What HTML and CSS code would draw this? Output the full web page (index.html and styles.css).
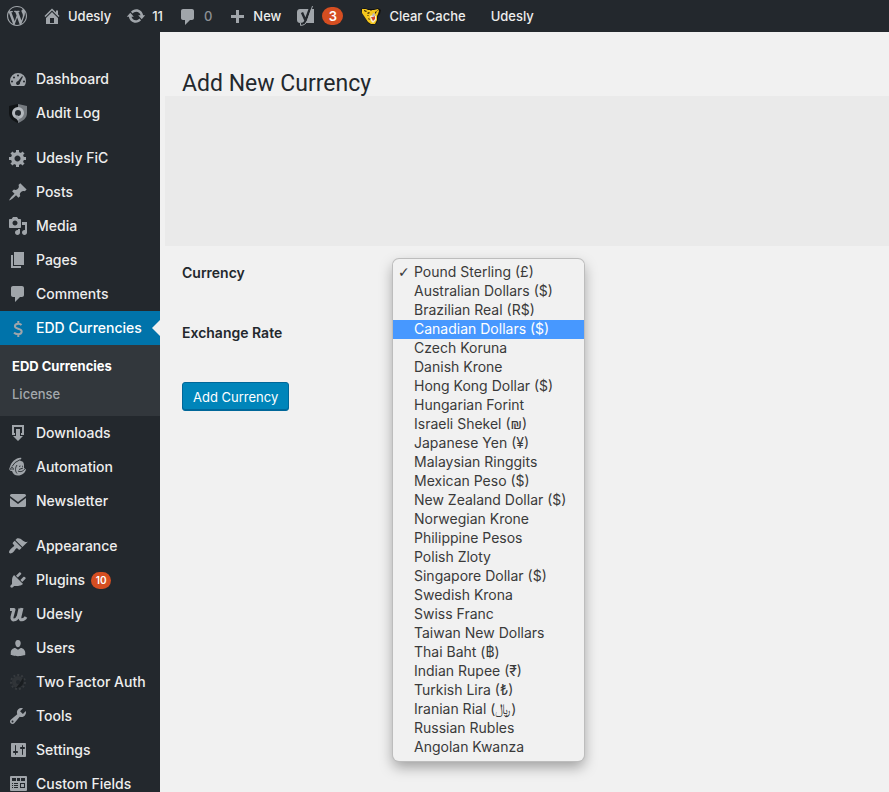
FILE: index.html
```html
<!DOCTYPE html>
<html lang="en">
<head>
<meta charset="utf-8">
<meta name="viewport" content="width=device-width, initial-scale=1">
<title>Add New Currency</title>
<link rel="stylesheet" href="styles.css">
</head>
<body>
<div class="app">
  <header class="topbar">
    <a class="topbar-link" href="#" aria-label="WordPress"><svg class="icon" viewBox="0 0 20 20"><path d="M20 10c0-5.51-4.49-10-10-10C4.48 0 0 4.49 0 10c0 5.52 4.48 10 10 10 5.51 0 10-4.48 10-10zM7.78 15.37L4.37 6.22c.55-.02 1.17-.08 1.17-.08.5-.06.44-1.13-.06-1.11 0 0-1.45.11-2.37.11-.18 0-.37 0-.58-.01C4.12 2.69 6.87 1.11 10 1.11c2.33 0 4.45.87 6.05 2.34-.68-.11-1.65.39-1.65 1.58 0 .74.45 1.36.9 2.1.35.61.55 1.36.55 2.46 0 1.49-1.4 5-1.4 5l-3.03-8.37c.54-.02.82-.17.82-.17.5-.05.44-1.25-.06-1.22 0 0-1.44.12-2.38.12-.87 0-2.33-.12-2.33-.12-.5-.03-.56 1.2-.06 1.22l.92.08 1.26 3.41zM17.41 10c.24-.64.74-1.87.43-4.25.7 1.29 1.05 2.71 1.05 4.25 0 3.29-1.73 6.24-4.4 7.78.97-2.59 1.94-5.2 2.92-7.78zM6.1 18.09C3.12 16.65 1.11 13.53 1.11 10c0-1.3.23-2.48.72-3.59C3.25 10.3 4.67 14.2 6.1 18.09zm4.03-6.63l2.58 6.98c-.86.29-1.76.45-2.71.45-.79 0-1.57-.11-2.29-.33.81-2.38 1.62-4.74 2.42-7.1z"/></svg></a>
    <a class="topbar-link" href="#"><svg class="icon" viewBox="0 0 20 20"><path d="M16 8.5l1.53 1.53-1.06 1.06L10 4.6l-6.47 6.49-1.06-1.06L10 2.5l4 4v-2h2v4zm-6-2.46l6 5.99V18H4v-5.97zM12 17v-5H8v5h4z"/></svg>Udesly</a>
    <a class="topbar-link" href="#"><svg class="icon" viewBox="0 0 20 20"><path d="M10.2 3.28c3.53 0 6.43 2.61 6.92 6h2.08l-3.5 4-3.5-4h2.32c-.45-1.97-2.21-3.45-4.32-3.45-1.45 0-2.73.71-3.54 1.78L4.95 5.66C6.23 4.2 8.11 3.28 10.2 3.28zm-.4 13.44c-3.52 0-6.43-2.61-6.92-6H.8l3.5-4c1.17 1.33 2.33 2.67 3.5 4H5.48c.45 1.97 2.21 3.45 4.32 3.45 1.45 0 2.73-.71 3.54-1.78l1.71 1.95c-1.28 1.46-3.15 2.38-5.25 2.38z"/></svg>11</a>
    <a class="topbar-link muted" href="#"><svg class="icon" viewBox="0 0 20 20"><path d="M5 3h9c1.1 0 2 .9 2 2v7c0 1.1-.9 2-2 2h-2l-5 5v-5H5c-1.1 0-2-.9-2-2V5c0-1.1.9-2 2-2z"/></svg>0</a>
    <a class="topbar-link" href="#"><svg class="icon" viewBox="0 0 20 20"><path d="M17 9v3h-5v5H9v-5H4V9h5V4h3v5h5z"/></svg>New</a>
    <a class="topbar-link" href="#" aria-label="SEO"><svg class="icon" viewBox="0 0 20 20"><path d="M4 3h14v14H4c-1.700 0-3-1.300-3-3V6c0-1.700 1.300-3 3-3z"/><path fill="none" stroke="#23282d" stroke-width="2.400" d="M14.800 0L9.800 14Q8.500 18 4.500 18M6 6.500L9.300 14"/><path fill="none" stroke="#a0a5aa" d="M16.500 0L11.500 14.500Q9.500 19.400 4.500 19.400V17"/></svg><span class="badge">3</span></a>
    <a class="topbar-link cache" href="#"><svg class="icon" viewBox="0 0 20 20"><path fill="#141210" d="M0 3l4-1 2 1h8l3-1 3 2-1 4-2 2v4l-2 4-4 1-4-2-4-7-2-3z"/><path fill="#f4c61d" d="M1 3l4 0 2 1h6l4-1 1 2-1 3-1 2v4l-2 4-4 0-3-2-4-6-2-3z"/><path fill="#f7f0d0" d="M9 10l3-1 3 1 0 4-3 3-2-2z"/><path fill="#d4432a" d="M10 11l2 0 2-1 0 3-2 2-1-2z"/><path fill="#b9b5c4" d="M12 7l2 1-1 3-2-1z"/><path fill="#3a2708" d="M3 4l3 1-1 1-2-1zM6 7l2-1 1 1-2 1zM9 4h2l-1 1zM14 6l2-1-1 2-1 1zM6 9l2 0-1 1zM7 12l2 1-1 1zM16 4l1 0-1 1z"/></svg>Clear Cache</a>
    <a class="topbar-link plain" href="#">Udesly</a>
  </header>
  <div class="body">
    <nav class="sidebar">
      <a class="item" href="#"><svg class="icon" viewBox="0 0 20 20"><path fill-rule="evenodd" d="M3.760 17h12.480A8 8 0 0 0 18 12a8 8 0 0 0-16 0c0 1.900.66 3.640 1.760 5zM9 6.500a1 1 0 0 1 2 0 1 1 0 0 1-2 0zM5 8.500a1 1 0 0 1 2 0 1 1 0 0 1-2 0zM3 12.500a1 1 0 0 1 2 0 1 1 0 0 1-2 0zM15 12.500a1 1 0 0 1 2 0 1 1 0 0 1-2 0zM14 7.300c.5-.2 1 .3.8.8L12 13.500c.3 1.500-.7 2.500-2 2.500s-2.400-1.200-1.800-2.600c.4-.8 1.100-1.200 2-1.300z"/></svg>Dashboard</a>
      <a class="item" href="#"><svg class="icon" viewBox="0 0 20 20"><path fill="#111416" d="M10 1L1 3v7c0 5 4 8 9 10z"/><path fill="#767b80" d="M10 1l9 2v7c0 5-4 8-9 10z"/><circle cx="10" cy="10" r="4.500" fill="#23282d" stroke="#b4b9be" stroke-width="3"/><path fill="#a0a5aa" d="M9 12l3 3-2 3-3-4z"/></svg>Audit Log</a>
      <div class="separator"></div>
      <a class="item" href="#"><svg class="icon" viewBox="0 0 20 20"><path d="M18 12h-2.180c-.17.7-.44 1.350-.81 1.930l1.540 1.540-2.100 2.100-1.540-1.540c-.58.36-1.230.63-1.910.79V19H8v-2.180c-.68-.16-1.330-.43-1.910-.79l-1.540 1.540-2.120-2.120 1.540-1.540c-.36-.58-.63-1.230-.79-1.910H1V9.030h2.170c.16-.7.44-1.350.8-1.940L2.430 5.550l2.100-2.100 1.540 1.540c.58-.37 1.240-.64 1.930-.81V2h3v2.180c.68.16 1.330.43 1.910.79l1.540-1.540 2.120 2.120-1.540 1.540c.36.59.64 1.240.8 1.940H18V12zm-8.500 1.500c1.660 0 3-1.340 3-3s-1.340-3-3-3-3 1.340-3 3 1.340 3 3 3z"/></svg>Udesly FiC</a>
      <a class="item" href="#"><svg class="icon" viewBox="0 0 20 20"><path d="M10.440 3.020l1.820-1.820 6.360 6.350-1.830 1.820c-1.050-.68-2.480-.57-3.410.36l-.75.75c-.92.93-1.040 2.350-.35 3.410l-1.830 1.820-2.410-2.410-2.800 2.790c-.42.42-3.380 2.710-3.800 2.290s1.860-3.390 2.280-3.810l2.790-2.790L4.100 9.360l1.830-1.820c1.050.69 2.480.57 3.400-.36l.75-.75c.93-.92 1.050-2.350.36-3.410z"/></svg>Posts</a>
      <a class="item" href="#"><svg class="icon" viewBox="0 0 20 20"><path d="M13 11V4c0-.55-.45-1-1-1h-1.670L9 1H5L3.670 3H2c-.55 0-1 .45-1 1v7c0 .55.45 1 1 1h10c.55 0 1-.45 1-1zM7 4.500c1.380 0 2.500 1.120 2.500 2.500S8.380 9.500 7 9.500 4.500 8.380 4.500 7 5.620 4.500 7 4.500zM14 6h5v10.500c0 1.380-1.120 2.500-2.500 2.500S14 17.880 14 16.500s1.120-2.500 2.500-2.500c.17 0 .34.02.5.05V9h-3V6zm-4 8.050V13h2v3.500c0 1.380-1.120 2.500-2.500 2.500S7 17.880 7 16.500 8.120 14 9.500 14c.17 0 .34.02.5.05z"/></svg>Media</a>
      <a class="item" href="#"><svg class="icon" viewBox="0 0 20 20"><path d="M6 15V2h10v13H6zm-1 1h8v2H3V5h2v11z"/></svg>Pages</a>
      <a class="item" href="#"><svg class="icon" viewBox="0 0 20 20"><path d="M5 2h9c1.100 0 2 .9 2 2v7c0 1.100-.9 2-2 2h-2l-5 5v-5H5c-1.100 0-2-.9-2-2V4c0-1.100.9-2 2-2z"/></svg>Comments</a>
      <a class="item current" href="#"><svg class="icon" viewBox="0 0 20 20"><path fill="none" stroke="#a0a5aa" stroke-width="2" d="M13.500 7Q12.500 5.800 10.300 5.800C8 5.800 6.900 6.900 6.900 8.300C6.900 11.600 13.700 9.700 13.700 13.500C13.700 15.200 12.300 16.200 10.100 16.200Q7.500 16.200 6 14.800M10.300 3v3M10.300 16v3"/></svg>EDD Currencies</a>
      <div class="submenu">
        <a class="subitem active" href="#">EDD Currencies</a>
        <a class="subitem" href="#">License</a>
      </div>
      <a class="item" href="#"><svg class="icon" viewBox="0 0 20 20"><path d="M4 2h12v10h-3v-2h1V4H6v6h1v2H4zM8 6h4v7h3l-5 5-5-5h3z"/></svg>Downloads</a>
      <a class="item" href="#"><svg class="icon" viewBox="0 0 20 20"><path d="M13.500 1C9 0 3 5 2 10c-1.500 2-.5 4 2 4 1 3 3 4.500 6 4.500 4 0 7-2.500 8-6l-2-1.500V8c0-3-2-4.500-4-4z"/><path fill="none" stroke="#23282d" stroke-width=".9" d="M4 9.500Q6 5 12.500 2.500M3 13q-1-2.500 1-2.500t1 2.500M9 8c-2 3-2 6 0 8.500M11 9.500l1.500-.5M14 9l1 .5M10 14c3 1.500 5 0 7-2M11 12.500l4-1.500"/></svg>Automation</a>
      <a class="item" href="#"><svg class="icon" viewBox="0 0 20 20"><path d="M3.500 3h13Q18 3 18 4.500V5l-8 6-8-6v-.5Q2 3 3.500 3zM2 7l8 6 8-6v7.500q0 1.500-1.500 1.500h-13Q2 16 2 14.500z"/></svg>Newsletter</a>
      <div class="separator"></div>
      <a class="item" href="#"><svg class="icon" viewBox="0 0 20 20"><path d="M14.480 11.060L7.410 3.990l1.500-1.500c.5-.56 2.300-.47 3.510.32 1.210.8 1.430 1.280 2.910 2.100 1.180.64 2.450 1.260 4.450.85zm-.71.71L6.700 4.700 4.930 6.470c-.39.39-.39 1.020 0 1.410l1.060 1.060c.39.39.39 1.030 0 1.420-.6.6-1.430 1.110-2.210 1.690-.35.26-.7.53-1.010.84C1.430 14.230.4 16.080 1.400 17.070c.99 1 2.840-.03 4.180-1.360.31-.31.58-.66.85-1.020.57-.78 1.080-1.610 1.690-2.210.39-.39 1.020-.39 1.410 0l1.060 1.060c.39.39 1.020.39 1.410 0z"/></svg>Appearance</a>
      <a class="item" href="#"><svg class="icon" viewBox="0 0 20 20"><path d="M13.110 4.360L9.870 7.600 8 5.730l3.240-3.240c.35-.34 1.050-.2 1.560.32.52.51.66 1.210.31 1.550zm-8 1.770l.91-1.120 9.010 9.010-1.190.84c-.71.71-2.630 1.160-3.820 1.160H6.140L4.900 17.260c-.59.59-1.540.59-2.120 0-.59-.58-.59-1.530 0-2.120l1.240-1.240v-3.880c0-1.130.4-3.190 1.090-3.890zm7.260 3.970l3.240-3.240c.34-.35 1.040-.21 1.550.31.52.51.66 1.210.31 1.550l-3.240 3.250z"/></svg>Plugins<span class="badge small">10</span></a>
      <a class="item" href="#"><svg class="icon" viewBox="0 0 20 20"><path fill="none" stroke="#a0a5aa" stroke-width="3" stroke-linejoin="round" d="M2 5.500h4L4 13c-.8 4 4.300 4 6.300-1L12 4.500M14 4L11.900 13c-.5 4 4 3.500 6.100 0"/></svg>Udesly</a>
      <a class="item" href="#"><svg class="icon" viewBox="0 0 20 20"><path d="M10 9.250c-2.270 0-2.730-3.440-2.730-3.440C7 4.020 7.820 2 9.970 2c2.160 0 2.980 2.020 2.710 3.810 0 0-.41 3.440-2.680 3.440zm0 2.570L12.720 10c2.390 0 4.520 2.330 4.520 4.530v2.490s-3.650 1.130-7.240 1.130c-3.650 0-7.240-1.130-7.240-1.130v-2.490c0-2.250 1.940-4.480 4.470-4.480z"/></svg>Users</a>
      <a class="item" href="#"><svg class="icon" viewBox="0 0 20 20"><circle cx="10" cy="10" r="7" fill="none" stroke="#363a3e" stroke-width="2" stroke-dasharray="2 2"/><circle cx="10" cy="10" r="6" fill="#303438"/><path fill="#191d20" d="M15 6a7 7 0 0 1-7 10l3-4z"/><circle cx="10" cy="10" r="2" fill="#23282d"/></svg>Two Factor Auth</a>
      <a class="item" href="#"><svg class="icon" viewBox="0 0 20 20"><path d="M16.680 9.770c-1.340 1.340-3.300 1.670-4.950.99l-5.410 6.520c-.99.99-2.590.99-3.580 0s-.99-2.590 0-3.570l6.520-5.420c-.68-1.650-.35-3.610.99-4.950 1.280-1.280 3.120-1.620 4.720-1.060l-2.890 2.890 2.820 2.820 2.860-2.870c.53 1.580.18 3.390-1.080 4.650zM3.810 16.210c.4.39 1.040.39 1.430 0 .4-.4.4-1.040 0-1.430-.39-.4-1.030-.4-1.430 0-.39.39-.39 1.030 0 1.430z"/></svg>Tools</a>
      <a class="item" href="#"><svg class="icon" viewBox="0 0 20 20"><path d="M18 16V4c0-.55-.45-1-1-1H4c-.55 0-1 .45-1 1v12c0 .55.45 1 1 1h13c.55 0 1-.45 1-1zM8 11h1c.55 0 1 .45 1 1s-.45 1-1 1H8v1.500c0 .28-.22.5-.5.5s-.5-.22-.5-.5V13H6c-.55 0-1-.45-1-1s.45-1 1-1h1V5.500c0-.28.22-.5.5-.5s.5.22.5.5V11zm6-2h-1c-.55 0-1-.45-1-1s.45-1 1-1h1V5.500c0-.28.22-.5.5-.5s.5.22.5.5V7h1c.55 0 1 .45 1 1s-.45 1-1 1h-1v5.500c0 .28-.22.5-.5.5s-.5-.22-.5-.5V9z"/></svg>Settings</a>
      <a class="item" href="#"><svg class="icon" viewBox="0 0 20 20"><path fill-rule="evenodd" d="M3 2h15q1 0 1 1v13q0 1-1 1H3q-1 0-1-1V3q0-1 1-1zM4 4v3h4V4zM9 4v3h3V4zM13 4v3h4V4zM4 9v1h1V9zM6 9v1h4V9zM4 11v1h1v-1zM6 11v1h4v-1zM4 13v1h1v-1zM6 13v1h4v-1zM12 9v5h5V9zM13 10h3v3h-3z"/></svg>Custom Fields</a>
    </nav>
    <main class="content">
      <h1 class="title">Add New Currency</h1>
      <div class="notice-area"></div>
      <form class="form">
        <div class="row">
          <label class="label" for="currency">Currency</label>
          <div class="field">
            <select class="menu" id="currency" size="26">
              <option selected>Pound Sterling (£)</option>
              <option>Australian Dollars ($)</option>
              <option>Brazilian Real (R$)</option>
              <option class="highlighted">Canadian Dollars ($)</option>
              <option>Czech Koruna</option>
              <option>Danish Krone</option>
              <option>Hong Kong Dollar ($)</option>
              <option>Hungarian Forint</option>
              <option>Israeli Shekel (₪)</option>
              <option>Japanese Yen (¥)</option>
              <option>Malaysian Ringgits</option>
              <option>Mexican Peso ($)</option>
              <option>New Zealand Dollar ($)</option>
              <option>Norwegian Krone</option>
              <option>Philippine Pesos</option>
              <option>Polish Zloty</option>
              <option>Singapore Dollar ($)</option>
              <option>Swedish Krona</option>
              <option>Swiss Franc</option>
              <option>Taiwan New Dollars</option>
              <option>Thai Baht (฿)</option>
              <option>Indian Rupee (₹)</option>
              <option>Turkish Lira (₺)</option>
              <option>Iranian Rial (﷼)</option>
              <option>Russian Rubles</option>
              <option>Angolan Kwanza</option>
            </select>
          </div>
        </div>
        <div class="row">
          <label class="label" for="rate">Exchange Rate</label>
          <div class="field"><input class="rate" id="rate" type="text"></div>
        </div>
        <button class="submit" type="submit">Add Currency</button>
      </form>
    </main>
  </div>
</div>
</body>
</html>
```
FILE: styles.css
```css
* { box-sizing: border-box; }

body {
  margin: 0;
  font-family: Inter, Roboto, "Liberation Sans", sans-serif;
  font-size: 14px;
  color: #23282d;
  background: #f1f1f1;
}

a { color: inherit; text-decoration: none; }

.app {
  display: flex;
  flex-direction: column;
  height: 100vh;
  overflow: hidden;
}

.icon {
  width: 20px;
  height: 20px;
  flex: none;
  fill: #a0a5aa;
}

.topbar {
  display: flex;
  align-items: center;
  gap: 15px;
  flex: none;
  height: 32px;
  padding: 0 7px;
  background: #23282d;
  color: #eee;
  font-weight: 500;
  font-size: 13px;
  white-space: nowrap;
}

.topbar-link { display: flex; align-items: center; gap: 6px; }
.topbar-link.muted { color: #8b9095; }
.topbar-link.cache { padding-left: 3px; gap: 8px; }
.topbar-link.plain { padding-left: 10px; }

.badge {
  min-width: 21px;
  height: 18px;
  padding: 0 6px;
  border-radius: 9px;
  background: #d54e21;
  color: #fff;
  font-size: 13px;
  font-weight: 600;
  line-height: 18px;
  text-align: center;
}

.badge.small {
  min-width: 20px;
  height: 17px;
  font-size: 10px;
  line-height: 17px;
  padding: 0 4px;
}

.body { display: flex; flex: 1; min-height: 0; }

.sidebar {
  flex: none;
  width: 160px;
  padding-top: 30px;
  overflow: hidden;
  background: #23282d;
  color: #eee;
  font-weight: 500;
}

.item {
  position: relative;
  display: flex;
  align-items: center;
  gap: 8px;
  height: 34px;
  padding: 0 0 2px 8px;
  white-space: nowrap;
}

.item .icon { margin-top: 2px; }
.item .badge { margin: 2px 0 0 -2px; }
.separator { height: 11px; }
.current { background: #0073aa; color: #fff; }

.current::after {
  content: "";
  position: absolute;
  right: 0;
  top: 9px;
  border: 8px solid transparent;
  border-left-width: 0;
  border-right-color: #f1f1f1;
}

.submenu { padding: 7px 12px 8px; background: #32373c; font-size: 13px; }

.subitem {
  display: block;
  line-height: 28px;
  color: #a3a8ad;
}

.subitem.active { color: #fff; font-weight: 700; }

.content { flex: 1; min-width: 0; padding: 37px 0 0 5px; }

.title {
  margin: 0;
  padding: 0 17px;
  font-family: Roboto, Inter, sans-serif;
  font-size: 23px;
  font-weight: 400;
  line-height: 30px;
  height: 27px;
}

.notice-area { height: 150px; background: #eaeaea; }
.form { padding: 12px 17px; }

.row {
  display: grid;
  grid-template-columns: 211px 1fr;
  height: 60px;
}

.label { font-weight: 600; line-height: 30px; }
.field { position: relative; }

.menu {
  position: absolute;
  z-index: 1;
  top: 1px;
  left: 0;
  width: 191px;
  height: 502px;
  padding: 4px 0;
  border: 0;
  border-radius: 6px;
  outline: 0;
  overflow: hidden;
  background: #f1f1f1;
  box-shadow: 0 0 0 1px #bdbdbd, 0 6px 14px rgba(0, 0, 0, 0.35);
  color: #3a3a3a;
  font: inherit;
}

.menu option {
  height: 19px;
  min-height: 19px;
  padding: 0 0 0 5px;
  line-height: 19px;
}

.menu option::before {
  content: "";
  display: inline-block;
  width: 16px;
}

.menu option:checked {
  background: linear-gradient(#f1f1f1, #f1f1f1);
  color: #3a3a3a;
}

.menu option:checked::before { content: "✓"; font-family: "DejaVu Sans", sans-serif; font-weight: 700; }
.menu option.highlighted { background: #4798ff; color: #fff; }

.rate { width: 160px; height: 28px; border: 1px solid #ddd; }

.submit {
  height: 29px;
  margin-top: 4px;
  padding: 0 10px;
  border: 1px solid #006799;
  border-radius: 3px;
  background: #0085ba;
  box-shadow: inset 0 -1px #006799;
  color: #fff;
  font: inherit;
  font-size: 13px;
}
```
